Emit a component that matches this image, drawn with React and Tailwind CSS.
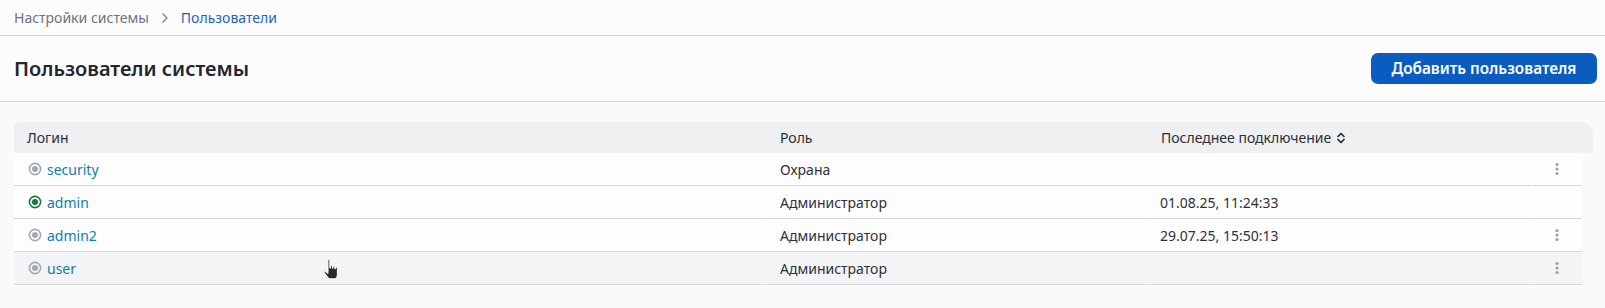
import React from "react";

function StatusIcon({ active }) {
  const c = active ? "#127a3f" : "#a3a9b3";
  return (
    <svg width="14" height="14" viewBox="0 0 14 14" className="shrink-0">
      <circle cx="7" cy="7" r="5.6" fill="none" stroke={c} strokeWidth="1.6" />
      <circle cx="7" cy="7" r="3" fill={c} />
    </svg>
  );
}

function Kebab() {
  return (
    <svg width="6" height="16" viewBox="0 0 6 16">
      <circle cx="3" cy="3.5" r="1.6" fill="#9aa2ae" />
      <circle cx="3" cy="8" r="1.6" fill="#9aa2ae" />
      <circle cx="3" cy="12.5" r="1.6" fill="#9aa2ae" />
    </svg>
  );
}

function SortIcon() {
  return (
    <svg width="10" height="12" viewBox="0 0 10 12" className="ml-[5px]">
      <path d="M2 4.5 L5 1.5 L8 4.5" fill="none" stroke="#2b2f36" strokeWidth="1.7" strokeLinecap="round" strokeLinejoin="round" />
      <path d="M2 7.5 L5 10.5 L8 7.5" fill="none" stroke="#2b2f36" strokeWidth="1.7" strokeLinecap="round" strokeLinejoin="round" />
    </svg>
  );
}

function HandCursor() {
  return (
    <svg width="20" height="24" viewBox="0 0 16 19" className="absolute left-[323px] top-[258px]">
      <path
        d="M4 1.5 C4 0.7 5.5 0.7 5.5 1.5 L5.5 8 L6 8 L6 6.5 C6 5.8 7.5 5.8 7.5 6.5 L7.5 8 L8 8 L8 7 C8 6.3 9.5 6.3 9.5 7 L9.5 8.5 L10 8.5 L10 7.8 C10 7.1 11.5 7.1 11.5 7.8 L11.5 13 C11.5 15 10.5 16.5 9 16.5 L6 16.5 C5 16.5 4.2 15.8 3.6 15 L1.2 11.8 C0.8 11.2 1.6 10.4 2.3 10.9 L4 12.3 Z"
        fill="#2a2a2a"
        stroke="#ffffff"
        strokeWidth="0.8"
      />
    </svg>
  );
}

const rows = [
  { login: "security", role: "Охрана", last: "", active: false, menu: true },
  { login: "admin", role: "Администратор", last: "01.08.25, 11:24:33", active: true, menu: false },
  { login: "admin2", role: "Администратор", last: "29.07.25, 15:50:13", active: false, menu: true },
  { login: "user", role: "Администратор", last: "", active: false, menu: true, hover: true },
];

export default function App() {
  return (
    <div className="w-[1605px] h-[308px] bg-[#fafafa] font-['Noto_Sans',sans-serif] relative overflow-hidden">
      <div className="h-[36px] border-b border-[#d7d9dd] bg-[#fcfcfc] pl-[14px] flex items-center text-[14px]">
        <span className="text-[#6c737d]">Настройки системы</span>
        <svg width="10" height="12" viewBox="0 0 10 12" className="mx-[11px]">
          <path d="M3 2 L7 6 L3 10" fill="none" stroke="#8a919b" strokeWidth="1.6" strokeLinecap="round" strokeLinejoin="round" />
        </svg>
        <span className="text-[#1f63c4]">Пользователи</span>
      </div>
      <div className="h-[66px] border-b border-[#d7d9dd] bg-[#fcfcfc] pl-[14px] pr-[8px] flex items-center justify-between">
        <h1 className="text-[20px] font-semibold text-[#23272d]">Пользователи системы</h1>
        <button className="w-[226px] h-[31px] rounded-[7px] bg-[#0b5cc1] text-white text-[15.3px] font-semibold flex items-center justify-center">
          Добавить пользователя
        </button>
      </div>
      <div className="pl-[14px] pt-[20px]">
        <div className="w-[1579px] h-[31px] bg-[#eef0f2] rounded-tl-[6px] rounded-tr-[12px] flex items-center text-[14px] text-[#2b2f36]">
          <div className="w-[753px] pl-[13px]">Логин</div>
          <div className="w-[380px] pl-[13px]">Роль</div>
          <div className="w-[385px] pl-[14px] flex items-center">
            Последнее подключение
            <SortIcon />
          </div>
        </div>
        <div className="w-[1568px]">
          {rows.map((r) => (
            <div
              key={r.login}
              className={`flex gap-px text-[14px] text-[#2e3238] ${r.hover ? "bg-[#f3f4f6]" : "bg-[#fdfdfd]"}`}
            >
              <div className="w-[752px] h-[33px] border-b border-[#d4d7dc] pl-[14px] flex items-center gap-[5px]">
                <StatusIcon active={r.active} />
                <span className="text-[#0f7ea8]">{r.login}</span>
              </div>
              <div className="w-[379px] h-[33px] border-b border-[#d4d7dc] pl-[13px] flex items-center">{r.role}</div>
              <div className="w-[384px] h-[33px] border-b border-[#d4d7dc] pl-[13px] flex items-center">{r.last}</div>
              <div className="w-[50px] h-[33px] border-b border-[#d4d7dc] flex items-center justify-center">
                {r.menu && <Kebab />}
              </div>
            </div>
          ))}
        </div>
      </div>
      <HandCursor />
    </div>
  );
}
